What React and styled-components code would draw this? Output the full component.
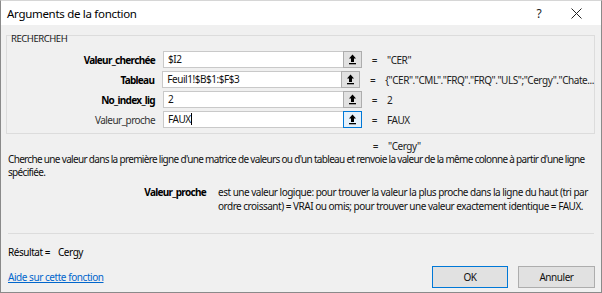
import React from "react";
import styled, { createGlobalStyle } from "styled-components";

const Global = createGlobalStyle`
  html, body { margin: 0; padding: 0; background: #ffffff; }
  body {
    font-family: "Noto Sans", "Segoe UI", Arial, sans-serif;
    font-size: 10px;
    letter-spacing: -0.45px;
    color: #000;
  }
  * { box-sizing: border-box; }
`;

const Window = styled.div`
  width: 602px;
  height: 293px;
  display: flex;
  flex-direction: column;
  border-left: 1px solid #8a8a8a;
  border-right: 1px solid #8a8a8a;
  border-bottom: 1px solid #8a8a8a;
  border-top: 1px solid #d6d6d6;
  background: #f0f0f0;
  overflow: hidden;
`;

const TitleBar = styled.div`
  height: 24px;
  background: #ffffff;
  display: flex;
  align-items: center;
  padding-left: 6px;
  font-size: 11.5px;
  letter-spacing: -0.3px;
  color: #000;
`;

const Title = styled.div`
  flex: 1;
`;

const TitleButton = styled.div`
  width: ${(p) => p.$w}px;
  height: 24px;
  display: flex;
  align-items: center;
  justify-content: center;
  font-size: 12px;
  color: #222;
`;

const Body = styled.div`
  flex: 1;
  display: flex;
  flex-direction: column;
  padding: 10px 6px 4px 5px;
`;

const Group = styled.div`
  border: 1px solid #dcdcdc;
  padding: 0 0 5px 0;
`;

const Legend = styled.div`
  line-height: 10px;
  margin: -2px 0 7px 4px;
  font-size: 9.5px;
  color: #1a1a1a;
`;

const Rows = styled.div`
  display: flex;
  flex-direction: column;
  gap: 3px;
`;

const Row = styled.div`
  display: flex;
  align-items: center;
  height: 17px;
`;

const ArgLabel = styled.div`
  width: 148px;
  margin-right: 8px;
  text-align: right;
  font-weight: ${(p) => (p.$bold ? 700 : 400)};
  letter-spacing: ${(p) => (p.$bold ? "-0.7px" : "-0.55px")};
  color: ${(p) => (p.$bold ? "#000" : "#333")};
  white-space: nowrap;
`;

const Input = styled.div`
  width: 180px;
  height: 17px;
  background: #fff;
  border: 1px solid #c9c9c9;
  border-right: none;
  padding-left: 4px;
  line-height: 15px;
  color: #111;
  white-space: nowrap;
  overflow: hidden;
`;

const Caret = styled.span`
  display: inline-block;
  width: 1px;
  height: 12px;
  background: #000;
  vertical-align: -2px;
`;

const RefButton = styled.div`
  width: 19px;
  height: 17px;
  border: 1px solid ${(p) => (p.$focus ? "#0078d7" : "#adadad")};
  background: ${(p) => (p.$focus ? "#e5f1fb" : "#e1e1e1")};
  display: flex;
  align-items: center;
  justify-content: center;
`;

const Equals = styled.div`
  width: 25px;
  text-align: center;
  color: #222;
  flex-shrink: 0;
`;

const Value = styled.div`
  color: #222;
  white-space: nowrap;
`;

const ResultLine = styled.div`
  display: flex;
  height: 14px;
  line-height: 14px;
  margin-top: 5px;
  padding-left: 357px;
`;

const Description = styled.div`
  line-height: 13px;
  padding-left: 2px;
  letter-spacing: -0.68px;
  color: #111;
`;

const ArgHelp = styled.div`
  display: flex;
  margin-top: 6px;
  line-height: 14px;
`;

const ArgHelpName = styled.div`
  width: 200px;
  text-align: right;
  font-weight: 700;
  letter-spacing: -0.7px;
  margin-right: 12px;
  flex-shrink: 0;
`;

const ArgHelpText = styled.div`
  width: 378px;
  color: #111;
  letter-spacing: -0.5px;
`;

const Separator = styled.div`
  height: 1px;
  background: #dcdcdc;
  margin: 20px 1px 0 2px;
`;

const Result = styled.div`
  display: flex;
  margin-top: 11px;
  line-height: 14px;
  padding-left: 2px;
  white-space: nowrap;
`;

const ResultLabel = styled.div`
  width: 50px;
`;

const Footer = styled.div`
  display: flex;
  align-items: center;
  margin-top: 7px;
  padding-left: 2px;
`;

const HelpLink = styled.a`
  flex: 1;
  color: #0066cc;
  text-decoration: underline;
  cursor: pointer;
`;

const DialogButton = styled.div`
  width: ${(p) => p.$w}px;
  height: 22px;
  margin-left: ${(p) => p.$ml}px;
  border: 1px solid ${(p) => (p.$default ? "#0078d7" : "#adadad")};
  background: #e1e1e1;
  display: flex;
  align-items: center;
  justify-content: center;
  color: #111;
`;

const RefIcon = () => (
  <svg width="9" height="11" viewBox="0 0 9 11">
    <path d="M4.5 0.5 L8 4.5 L6 4.5 L6 8 L3 8 L3 4.5 L1 4.5 Z" fill="#000" />
    <rect x="1" y="9" width="7" height="1.3" fill="#000" />
  </svg>
);

const CloseIcon = () => (
  <svg width="11" height="11" viewBox="0 0 11 11">
    <path d="M0.5 0.5 L10.5 10.5 M10.5 0.5 L0.5 10.5" stroke="#222" strokeWidth="1" />
  </svg>
);

const args = [
  { name: "Valeur_cherchée", bold: true, input: "$I2", value: "\"CER\"" },
  { name: "Tableau", bold: true, input: "Feuil1!$B$1:$F$3", value: "{\"CER\".\"CML\".\"FRQ\".\"FRQ\".\"ULS\";\"Cergy\".\"Chate..." },
  { name: "No_index_lig", bold: true, input: "2", value: "2" },
  { name: "Valeur_proche", bold: false, input: "FAUX", value: "FAUX", focus: true },
];

export default function App() {
  return (
    <>
      <Global />
      <Window>
        <TitleBar>
          <Title>Arguments de la fonction</Title>
          <TitleButton $w={24}>?</TitleButton>
          <TitleButton $w={50}>
            <CloseIcon />
          </TitleButton>
        </TitleBar>
        <Body>
          <Group>
            <Legend>RECHERCHEH</Legend>
            <Rows>
              {args.map((a) => (
                <Row key={a.name}>
                  <ArgLabel $bold={a.bold}>{a.name}</ArgLabel>
                  <Input>
                    {a.input}
                    {a.focus && <Caret />}
                  </Input>
                  <RefButton $focus={a.focus}>
                    <RefIcon />
                  </RefButton>
                  <Equals>=</Equals>
                  <Value>{a.value}</Value>
                </Row>
              ))}
            </Rows>
          </Group>
          <ResultLine>
            <Equals>=</Equals>
            <Value>"Cergy"</Value>
          </ResultLine>
          <Description>
            Cherche une valeur dans la première ligne d'une matrice de valeurs ou d'un tableau et renvoie la valeur de la même colonne à partir d'une ligne spécifiée.
          </Description>
          <ArgHelp>
            <ArgHelpName>Valeur_proche</ArgHelpName>
            <ArgHelpText>
              est une valeur logique: pour trouver la valeur la plus proche dans la ligne du haut (tri par ordre croissant) = VRAI ou omis; pour trouver une valeur exactement identique = FAUX.
            </ArgHelpText>
          </ArgHelp>
          <Separator />
          <Result>
            <ResultLabel>Résultat =</ResultLabel>
            <div>Cergy</div>
          </Result>
          <Footer>
            <HelpLink>Aide sur cette fonction</HelpLink>
            <DialogButton $w={76} $ml={0} $default>OK</DialogButton>
            <DialogButton $w={77} $ml={10}>Annuler</DialogButton>
          </Footer>
        </Body>
      </Window>
    </>
  );
}
